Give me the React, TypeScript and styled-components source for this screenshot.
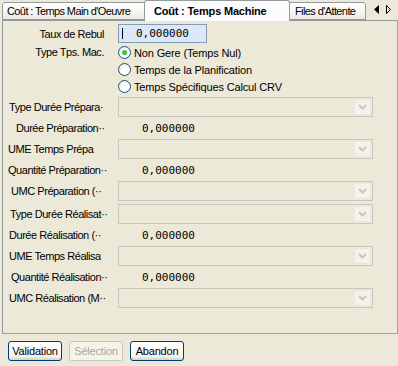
import React from 'react';
import styled, { createGlobalStyle } from 'styled-components';

const GlobalStyle = createGlobalStyle`
  body {
    margin: 0;
    background: #ece9d8;
  }
`;

const Window = styled.div`
  width: 398px;
  height: 366px;
  background: #ece9d8;
  font-family: "Liberation Sans", Arial, sans-serif;
  font-size: 11px;
  letter-spacing: -0.15px;
  color: #000;
  overflow: hidden;
`;

const TabStrip = styled.div`
  display: flex;
  align-items: flex-end;
  height: 21px;
  padding-left: 2px;
  margin-bottom: -1px;
  position: relative;
  z-index: 1;
`;

const Tab = styled.div<{ $active?: boolean; $w: number; $pad: number }>`
  box-sizing: border-box;
  width: ${p => p.$w}px;
  height: ${p => (p.$active ? 21 : 18)}px;
  margin: ${p => (p.$active ? '0 -2px 0 -2px' : '0 0 1px 0')};
  padding-left: ${p => p.$pad}px;
  display: flex;
  align-items: center;
  border: 1px solid #919b9c;
  border-bottom: ${p => (p.$active ? 'none' : '1px solid #919b9c')};
  border-radius: 3px 3px 0 0;
  background: ${p => (p.$active ? '#fcfcfe' : 'linear-gradient(#ffffff, #f3f2ec 70%, #e9e7df)')};
  font-weight: ${p => (p.$active ? 'bold' : 'normal')};
  letter-spacing: ${p => (p.$active ? '-0.2px' : '-0.6px')};
  white-space: nowrap;
  position: relative;
  z-index: ${p => (p.$active ? 2 : 0)};
`;

const Arrows = styled.div`
  margin-left: auto;
  display: flex;
  gap: 7px;
  align-self: flex-start;
  padding: 5px 7px 0 0;
`;

const Panel = styled.div`
  box-sizing: border-box;
  margin-left: 2px;
  width: 396px;
  height: 314px;
  border: 1px solid #919b9c;
  border-right-color: #a7a495;
  border-bottom-color: #a7a495;
  padding: 3px 0 0 5px;
  display: flex;
  flex-direction: column;
`;

const Row = styled.div<{ $h: number; $mt?: number }>`
  display: flex;
  align-items: center;
  height: ${p => p.$h}px;
  margin-top: ${p => p.$mt ?? 0}px;
`;

const Label = styled.div<{ $right?: boolean; $pad?: number }>`
  box-sizing: border-box;
  width: 102px;
  margin-right: 8px;
  flex-shrink: 0;
  white-space: nowrap;
  overflow: hidden;
  letter-spacing: -0.45px;
  text-align: ${p => (p.$right ? 'right' : 'left')};
  padding: ${p => (p.$right ? '0 6px 0 0' : `0 0 0 ${p.$pad ?? 0}px`)};
`;

const TextInput = styled.div`
  box-sizing: border-box;
  width: 89px;
  height: 19px;
  border: 1px solid #7f9db9;
  background: #dde7f8;
  display: flex;
  align-items: center;
  padding-left: 3px;
`;

const Caret = styled.span`
  width: 1px;
  height: 11px;
  background: #000;
  margin-right: 13px;
`;

const Mono = styled.span<{ $indent?: number }>`
  font-family: "DejaVu Sans Mono", "Liberation Mono", monospace;
  font-size: 11px;
  letter-spacing: 0;
  padding-left: ${p => p.$indent ?? 0}px;
`;

const RadioGroup = styled.div`
  display: flex;
  flex-direction: column;
  margin-top: 1px;
`;

const RadioItem = styled.div`
  display: flex;
  align-items: center;
  height: 17px;
  gap: 3px;
`;

const RadioCircle = styled.span<{ $checked?: boolean }>`
  box-sizing: border-box;
  width: 13px;
  height: 13px;
  border-radius: 50%;
  border: 1px solid #1c5180;
  background: radial-gradient(circle at 65% 65%, #ffffff 30%, #e6e5dc 100%);
  display: flex;
  align-items: center;
  justify-content: center;
  &::after {
    content: '';
    width: 5px;
    height: 5px;
    border-radius: 50%;
    background: ${p => (p.$checked ? 'radial-gradient(circle at 40% 40%, #55d355, #21a121)' : 'transparent')};
  }
`;

const Combo = styled.div`
  box-sizing: border-box;
  width: 255px;
  height: 20px;
  border: 1px solid #c9c7ba;
  background: #ece9d8;
  display: flex;
  justify-content: flex-end;
  padding: 1px;
`;

const DropButton = styled.div`
  box-sizing: border-box;
  width: 17px;
  height: 100%;
  border: 1px solid #e8e6dd;
  border-radius: 2px;
  background: #f3f2ec;
  display: flex;
  align-items: center;
  justify-content: center;
`;

const Footer = styled.div`
  display: flex;
  gap: 7px;
  padding: 7px 0 0 8px;
`;

const Button = styled.button`
  box-sizing: border-box;
  width: 54px;
  height: 20px;
  padding: 0;
  font-family: inherit;
  font-size: 11px;
  letter-spacing: -0.2px;
  color: #000;
  border: 1px solid #003c74;
  border-radius: 3px;
  background: linear-gradient(#ffffff, #f4f3ee 80%, #d6d0c5);
  &:disabled {
    color: #aca899;
    border-color: #c9c7ba;
    background: #f5f4ea;
  }
`;

const Chevron = () => (
  <svg width="9" height="6" viewBox="0 0 9 6">
    <polyline points="1,1 4.5,4.5 8,1" fill="none" stroke="#c9c7ba" strokeWidth="2" />
  </svg>
);

const ComboBox = () => (
  <Combo>
    <DropButton>
      <Chevron />
    </DropButton>
  </Combo>
);

type Field =
  | { kind: 'combo'; label: string; pad: number; mt?: number }
  | { kind: 'value'; label: string; pad: number; value: string };

const fields: Field[] = [
  { kind: 'combo', label: 'Type Durée Prépara·', pad: 1 },
  { kind: 'value', label: 'Durée Préparation··', pad: 8, value: '0,000000' },
  { kind: 'combo', label: 'UME Temps Prépa', pad: 0 },
  { kind: 'value', label: 'Quantité Préparation··', pad: 0, value: '0,000000' },
  { kind: 'combo', label: 'UMC Préparation (··', pad: 3 },
  { kind: 'combo', label: 'Type Durée Réalisat··', pad: 2, mt: 3 },
  { kind: 'value', label: 'Durée Réalisation (··', pad: 1, value: '0,000000' },
  { kind: 'combo', label: 'UME Temps Réalisa', pad: 1 },
  { kind: 'value', label: 'Quantité Réalisation··', pad: 3, value: '0,000000' },
  { kind: 'combo', label: 'UMC Réalisation (M··', pad: 1 },
];

export default function App() {
  return (
    <Window>
      <GlobalStyle />
      <TabStrip>
        <Tab $w={144} $pad={4}>Coût : Temps Main d'Oeuvre</Tab>
        <Tab $active $w={146} $pad={9}>Coût : Temps Machine</Tab>
        <Tab $w={78} $pad={6}>Files d'Attente</Tab>
        <Arrows>
          <svg width="5" height="9" viewBox="0 0 5 9">
            <polygon points="5,0 0,4.5 5,9" fill="#000" />
          </svg>
          <svg width="5" height="9" viewBox="0 0 5 9">
            <polygon points="0.5,0.5 4.5,4.5 0.5,8.5" fill="none" stroke="#000" />
          </svg>
        </Arrows>
      </TabStrip>
      <Panel>
        <Row $h={19}>
          <Label $right>Taux de Rebul</Label>
          <TextInput>
            <Caret />
            <Mono>0,000000</Mono>
          </TextInput>
        </Row>
        <Row $h={51} style={{ alignItems: 'flex-start' }}>
          <Label $right style={{ lineHeight: '17px', marginTop: 1 }}>Type Tps. Mac.</Label>
          <RadioGroup>
            <RadioItem>
              <RadioCircle $checked />
              Non Gere (Temps Nul)
            </RadioItem>
            <RadioItem>
              <RadioCircle />
              Temps de la Planification
            </RadioItem>
            <RadioItem>
              <RadioCircle />
              Temps Spécifiques Calcul CRV
            </RadioItem>
          </RadioGroup>
        </Row>
        {fields.map((f, i) =>
          f.kind === 'combo' ? (
            <Row key={i} $h={20} $mt={i === 0 ? 3 : f.mt ?? 0}>
              <Label $pad={f.pad}>{f.label}</Label>
              <ComboBox />
            </Row>
          ) : (
            <Row key={i} $h={22}>
              <Label $pad={f.pad}>{f.label}</Label>
              <Mono $indent={24}>{f.value}</Mono>
            </Row>
          )
        )}
      </Panel>
      <Footer>
        <Button>Validation</Button>
        <Button disabled>Sélection</Button>
        <Button>Abandon</Button>
      </Footer>
    </Window>
  );
}
